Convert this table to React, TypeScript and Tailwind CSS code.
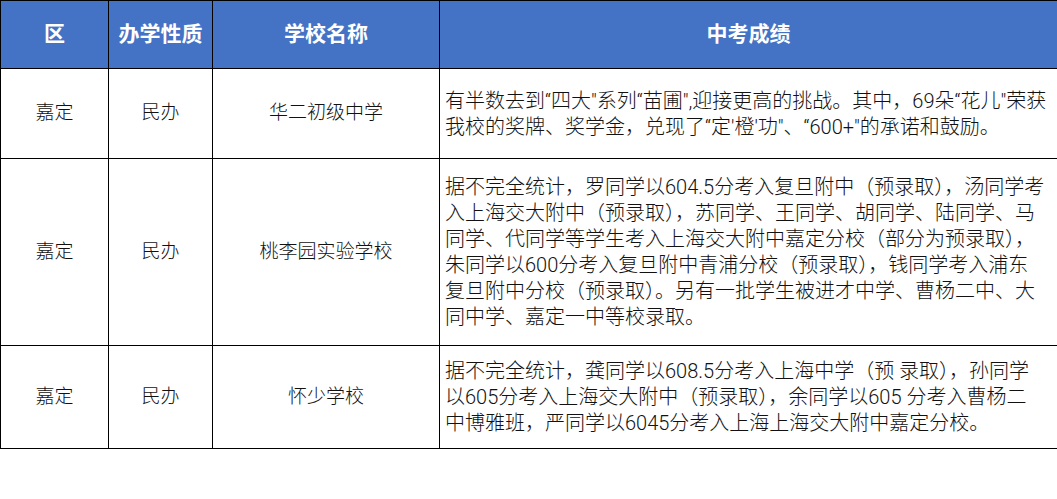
const rows = [
  {
    district: '嘉定',
    kind: '民办',
    school: '华二初级中学',
    h: 'h-[90px]',
    lines: [
      '有半数去到“四大"系列“苗圃",迎接更高的挑战。其中，69朵“花儿"荣获',
      "我校的奖牌、奖学金，兑现了“定'橙'功\"、“600+\"的承诺和鼓励。",
    ],
  },
  {
    district: '嘉定',
    kind: '民办',
    school: '桃李园实验学校',
    h: 'h-[187px]',
    lines: [
      '据不完全统计，罗同学以604.5分考入复旦附中（预录取），汤同学考',
      '入上海交大附中（预录取），苏同学、王同学、胡同学、陆同学、马',
      '同学、代同学等学生考入上海交大附中嘉定分校（部分为预录取），',
      '朱同学以600分考入复旦附中青浦分校（预录取），钱同学考入浦东',
      '复旦附中分校（预录取）。另有一批学生被进才中学、曹杨二中、大',
      '同中学、嘉定一中等校录取。',
    ],
  },
  {
    district: '嘉定',
    kind: '民办',
    school: '怀少学校',
    h: 'h-[103px]',
    lines: [
      '据不完全统计，龚同学以608.5分考入上海中学（预 录取），孙同学',
      '以605分考入上海交大附中（预录取），余同学以605 分考入曹杨二',
      '中博雅班，严同学以6045分考入上海上海交大附中嘉定分校。',
    ],
  },
];

const headers = ['区', '办学性质', '学校名称', '中考成绩'];

export default function App() {
  return (
    <div className="w-[1057px] h-[499px] bg-white font-['Roboto','Noto_Sans_CJK_SC',sans-serif] text-[#111]">
      <table className="table-fixed border-collapse w-[1057px]">
        <colgroup>
          <col className="w-[108px]" />
          <col className="w-[104px]" />
          <col className="w-[227px]" />
          <col className="w-[618px]" />
        </colgroup>
        <thead>
          <tr className="h-[68px] bg-[#4472c4]">
            {headers.map((t) => (
              <th
                key={t}
                className="border border-black text-white text-[21px] font-bold text-center align-middle p-0"
              >
                {t}
              </th>
            ))}
          </tr>
        </thead>
        <tbody>
          {rows.map((r) => (
            <tr key={r.school} className={r.h}>
              <td className="border border-black text-center align-middle text-[19px] font-light p-0">{r.district}</td>
              <td className="border border-black text-center align-middle text-[19px] font-light p-0">{r.kind}</td>
              <td className="border border-black text-center align-middle text-[19px] font-light p-0">{r.school}</td>
              <td className="border border-black align-middle pl-[5px] pr-0 py-0">
                {r.lines.map((l, i) => (
                  <div key={i} className="whitespace-nowrap text-[20px] font-light leading-[26px]">
                    {l}
                  </div>
                ))}
              </td>
            </tr>
          ))}
        </tbody>
      </table>
    </div>
  );
}
